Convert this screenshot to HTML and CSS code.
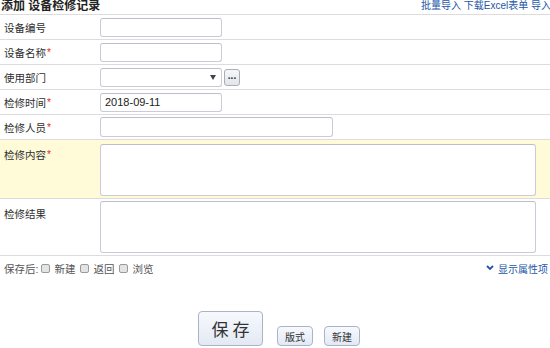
FILE: index.html
```html
<!DOCTYPE html>
<html lang="zh">
<head>
<meta charset="utf-8">
<link rel="stylesheet" href="styles.css">
</head>
<body>
<div class="page">
  <div class="head">
    <div class="title">添加 设备检修记录</div>
    <div class="links"><a>批量导入</a> <a>下载Excel表单</a> <a>导入</a></div>
  </div>
  <div class="form">
    <div class="row">
      <div class="label">设备编号</div>
      <div class="field"><span class="input w-s"></span></div>
    </div>
    <div class="row">
      <div class="label">设备名称<span class="req">*</span></div>
      <div class="field"><span class="input w-s"></span></div>
    </div>
    <div class="row">
      <div class="label">使用部门</div>
      <div class="field">
        <span class="input w-s select"><svg class="arrow" width="6" height="5" viewBox="0 0 6 5"><path d="M0 0h6L3 5z" fill="#444"/></svg></span>
        <span class="dots">...</span>
      </div>
    </div>
    <div class="row">
      <div class="label">检修时间<span class="req">*</span></div>
      <div class="field"><span class="input w-s val">2018-09-11</span></div>
    </div>
    <div class="row">
      <div class="label">检修人员<span class="req">*</span></div>
      <div class="field"><span class="input w-m"></span></div>
    </div>
    <div class="row tall hl">
      <div class="label">检修内容<span class="req">*</span></div>
      <div class="field"><span class="area a1"></span></div>
    </div>
    <div class="row tall">
      <div class="label">检修结果</div>
      <div class="field"><span class="area a2"></span></div>
    </div>
  </div>
  <div class="after">
    <div class="opts">保存后:<span class="cb"></span>新建<span class="cb"></span>返回<span class="cb"></span>浏览</div>
    <div class="props"><svg width="8" height="6" viewBox="0 0 8 6"><path d="M1 1l3 3 3-3" fill="none" stroke="#2456a8" stroke-width="1.8"/></svg>显示属性项</div>
  </div>
  <div class="actions">
    <button class="btn big">保存</button>
    <button class="btn small">版式</button>
    <button class="btn small">新建</button>
  </div>
</div>
</body>
</html>
```
FILE: styles.css
```css
html, body { margin: 0; padding: 0; background: #fff; }
body {
  font-family: "Liberation Sans", "Noto Sans CJK SC", sans-serif;
  font-size: 10.5px;
  color: #333;
  width: 550px;
  height: 348px;
  overflow: hidden;
}
.page { width: 550px; }
.head {
  display: flex;
  justify-content: space-between;
  align-items: flex-start;
  height: 14px;
  border-bottom: 1px solid #dcdcdc;
}
.title {
  font-weight: bold;
  font-size: 12px;
  line-height: 13px;
  color: #222;
  padding-left: 1px;
}
.links {
  font-size: 10px;
  line-height: 12px;
  color: #2456a8;
  white-space: nowrap;
  margin-right: -1px;
}
.row {
  display: flex;
  align-items: center;
  height: 24px;
  border-bottom: 1px solid #dcdcdc;
}
.label {
  width: 96px;
  padding-left: 4px;
  flex: none;
  color: #2e2e2e;
}
.req { color: #e0262a; margin-left: 1px; font-size: 10px; position: relative; top: -1px; }
.field { display: flex; align-items: center; gap: 2px; }
.input {
  display: block;
  box-sizing: border-box;
  height: 19px;
  border: 1px solid #cbcbd8;
  border-top-color: #bdbdd0;
  border-radius: 3px;
  background: #fff;
}
.w-s { width: 122px; }
.w-m { width: 233px; height: 20px; }
.val {
  font-size: 11px;
  line-height: 17px;
  padding-left: 4px;
  color: #222;
}
.select { display: flex; justify-content: flex-end; align-items: center; padding-right: 5px; }
.dots {
  box-sizing: border-box;
  width: 16px;
  height: 17px;
  border: 1px solid #a8adb8;
  border-radius: 3px;
  background: linear-gradient(#f6f7f9, #e2e5ea);
  font-size: 10px;
  font-weight: bold;
  line-height: 11px;
  text-align: center;
  color: #333;
}
.row.tall { align-items: flex-start; }
.row.tall .label { padding-top: 7px; }
.row.hl { background: #fffbd9; height: 58px; }
.row.hl .field { padding-top: 4px; }
.area {
  display: block;
  box-sizing: border-box;
  width: 436px;
  border: 1px solid #cbcbd8;
  border-top-color: #bdbdd0;
  border-radius: 3px;
  background: #fff;
}
.a1 { height: 52px; }
.row:last-child { height: 56px; }
.row:last-child .field { padding-top: 2px; }
.a2 { height: 52px; }
.after {
  display: flex;
  justify-content: space-between;
  align-items: center;
  height: 24px;
  font-size: 10.5px;
  color: #555;
}
.opts { display: flex; align-items: center; padding-left: 4px; }
.cb {
  display: inline-block;
  box-sizing: border-box;
  width: 9px;
  height: 9px;
  border: 1px solid #9a9a9a;
  border-radius: 2px;
  background: #e4e4e4;
  margin: 0 4px 0 5px;
}
.opts .cb:first-child { margin-left: 3px; }
.props {
  display: flex;
  align-items: center;
  gap: 4px;
  color: #2456a8;
  font-size: 10px;
  padding-right: 2px;
}
.actions {
  display: flex;
  justify-content: center;
  align-items: flex-end;
  margin-top: 31px;
  padding-left: 8px;
}
.btn {
  box-sizing: border-box;
  font-family: "Liberation Sans", "Noto Sans CJK SC", sans-serif;
  color: #333;
  border: 1px solid #aab4c8;
  border-radius: 4px;
  background: linear-gradient(#f7f9fd, #e3e9f4);
  padding: 0;
}
.big {
  width: 65px;
  height: 35px;
  font-size: 17px;
  letter-spacing: 4px;
  text-indent: 4px;
  margin-right: 14px;
}
.small {
  width: 36px;
  height: 20px;
  font-size: 10px;
  margin-right: 11px;
}
.small:last-child { margin-right: 0; }
```
